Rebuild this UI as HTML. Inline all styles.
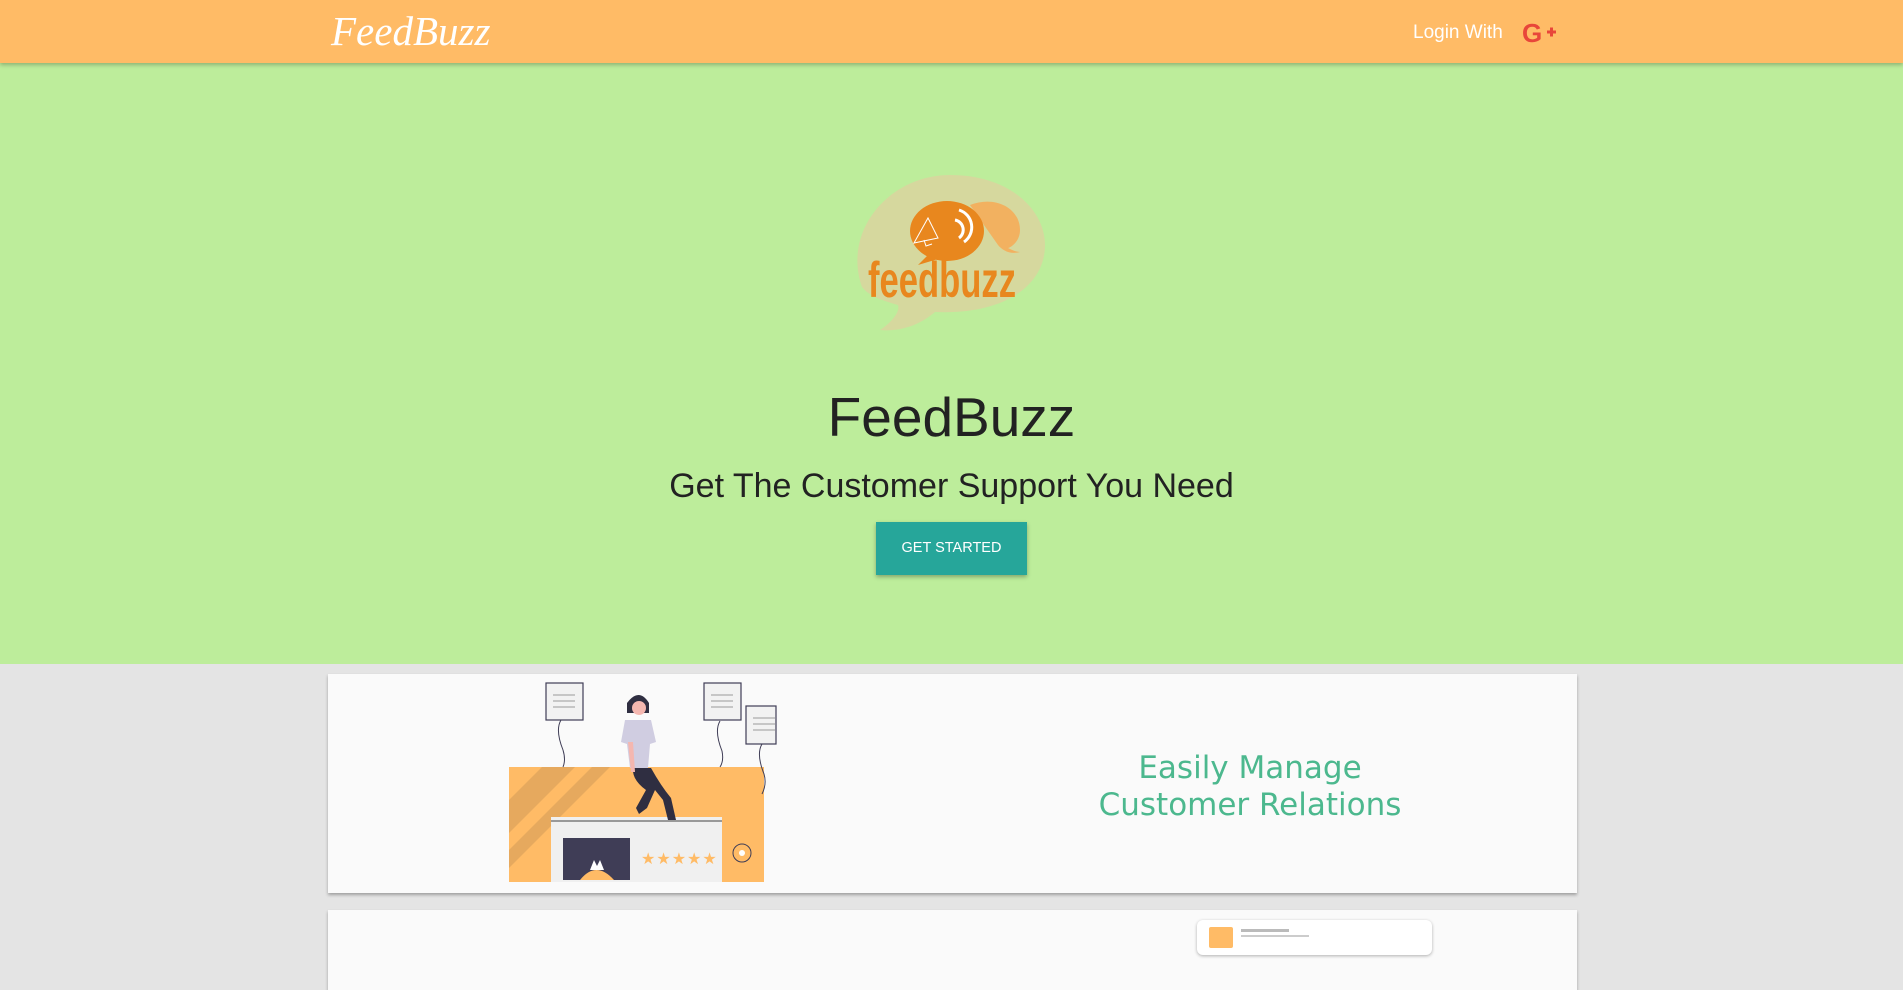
<!DOCTYPE html>
<html><head><meta charset="utf-8"><style>
*{margin:0;padding:0;box-sizing:border-box}
body{width:1903px;height:968px;overflow:hidden;background:#e4e4e4;font-family:"Liberation Sans",sans-serif;position:relative}
.nav{position:absolute;left:0;top:0;width:1903px;height:63px;background:#ffbb66;box-shadow:0 2px 4px rgba(0,0,0,.25);z-index:2}
.brand{position:absolute;left:331px;top:7px;font-family:"Liberation Serif",serif;font-style:italic;font-size:41px;color:#fff}
.login{position:absolute;left:1413px;top:22px;font-size:19px;color:#fff}
.hero{position:absolute;left:0;top:63px;width:1903px;height:601px;background:#bded9b}
h1{position:absolute;left:0;width:1903px;top:385px;text-align:center;font-weight:normal;font-size:55px;color:#222}
h2{position:absolute;left:0;width:1903px;top:467px;text-align:center;font-weight:normal;font-size:34px;color:#222}
.btn{position:absolute;left:876px;top:522px;width:151px;height:53px;background:#26a69a;color:#fff;font-size:14.5px;text-align:center;line-height:53px;box-shadow:0 2px 4px rgba(0,0,0,.3)}
.card{position:absolute;left:328px;width:1249px;background:#fafafa;box-shadow:0 2px 3px rgba(0,0,0,.3)}
.tx{position:absolute;left:1000px;width:500px;top:750px;text-align:center;font-family:"Comic Sans MS","DejaVu Sans",sans-serif;font-size:31px;line-height:37px;color:#4cb88e}
</style></head><body>
<div class="nav"><div class="brand">FeedBuzz</div><div class="login">Login With</div>
<svg style="position:absolute;left:1522px;top:20px" width="42" height="26" viewBox="0 0 42 26"><text x="0" y="22" font-family="Liberation Sans" font-weight="bold" font-size="26" fill="#e8463a">G</text><path d="M25 12h9M29.5 7.5v9" stroke="#e8463a" stroke-width="3"/></svg>
</div>
<div class="hero"></div>
<svg style="position:absolute;left:820px;top:160px" width="260" height="190" viewBox="0 0 260 190">
<path d="M42 127 C22 70 70 15 130 15 C190 15 225 50 225 85 C225 125 185 155 115 152 C100 165 80 172 60 170 C75 160 80 150 78 145 C60 140 48 135 42 127Z" fill="#d6d89e"/>
<path d="M150 45 C175 35 200 48 200 70 C200 82 190 88 188 88 C192 90 196 92 200 92 C190 95 182 90 178 85 Z" fill="#f2b160"/>
<ellipse cx="127" cy="71" rx="37" ry="30" fill="#e8871e"/>
<path d="M108 95 L98 105 L118 99Z" fill="#e8871e"/>
<path d="M94 83 L108 58 L118 78Z M104 80 l2 6 l6-2" stroke="#fff" stroke-width="1" fill="none"/>
<path d="M135 60 a10 10 0 0 1 4 18 M139 50 a18 18 0 0 1 5 32" stroke="#fff" stroke-width="3" fill="none"/>
<text x="48" y="137" font-family="Liberation Sans Narrow,Liberation Sans" font-weight="bold" font-size="50" fill="#e8871e" textLength="148" lengthAdjust="spacingAndGlyphs">feedbuzz</text>
</svg>
<h1>FeedBuzz</h1>
<h2>Get The Customer Support You Need</h2>
<div class="btn">GET STARTED</div>
<div class="card" style="top:674px;height:219px"></div>
<div class="card" style="top:910px;height:80px"></div>
<svg style="position:absolute;left:0;top:0" width="1903" height="968">
<rect x="509" y="767" width="255" height="115" fill="#ffbb66"/>
<path d="M509 800 L542 767 L575 767 L509 833Z M509 850 L592 767 L610 767 L509 868Z" fill="#e6a95e"/>
<rect x="551" y="817" width="171" height="65" fill="#f0f0f0"/><rect x="551" y="820" width="171" height="2" fill="#999"/>
<rect x="563" y="838" width="67" height="42" fill="#3f3d56"/>
<path d="M580 880 q16-20 34 0Z" fill="#ffbb66"/><path d="M590 870 l4-10 l3 6 l3-6 l4 10Z" fill="#fff"/>
<text x="641" y="864" font-size="16" fill="#ffbb66" letter-spacing="1">★★★★★</text>
<circle cx="742" cy="853" r="9" fill="none" stroke="#3f3d56"/><circle cx="742" cy="853" r="3" fill="#fff"/>
<g fill="#f2f2f2" stroke="#3f3d56" stroke-width="1.2"><rect x="546" y="683" width="37" height="37"/><rect x="704" y="683" width="37" height="37"/><rect x="746" y="706" width="30" height="38"/></g>
<g stroke="#999"><path d="M553 695h22M553 701h22M553 707h22M711 695h22M711 701h22M711 707h22M753 718h22M753 724h22M753 730h22"/></g>
<path d="M561 720 q-6 10 2 30 q3 10 0 17 M720 721 q-6 10 2 30 q2 10-2 16 M762 744 q-6 10 2 30 q3 10-2 20" stroke="#3f3d56" fill="none"/>
<path d="M627 703 q12-16 22 0 v10 h-22Z" fill="#2f2e41"/><circle cx="639" cy="708" r="7" fill="#f4b7b0"/>
<path d="M625 720 l26 0 l5 22 l-6 2 l-2 24 l-18 0 l-3-24 l-6-2Z" fill="#d0cde1"/>
<path d="M633 768 l18 0 q10 18 20 30 l5 22 l-8 0 l-5-20 l-8-10 l-8 18 l-8 6 l-3-6 l10-18 q-14-10-13-22Z" fill="#2f2e41"/>
<path d="M628 742 l3 30 l4 0 l-2-30Z" fill="#f4b7b0"/>
</svg>
<div class="tx">Easily Manage<br>Customer Relations</div>
<div style="position:absolute;left:1197px;top:920px;width:235px;height:35px;background:#fff;border-radius:6px;box-shadow:0 1px 3px rgba(0,0,0,.3)"><div style="position:absolute;left:12px;top:7px;width:24px;height:21px;background:#ffbb66;border-radius:2px"></div><div style="position:absolute;left:44px;top:9px;width:48px;height:3px;background:#bbb"></div><div style="position:absolute;left:44px;top:15px;width:68px;height:2px;background:#ccc"></div></div>
</body></html>
